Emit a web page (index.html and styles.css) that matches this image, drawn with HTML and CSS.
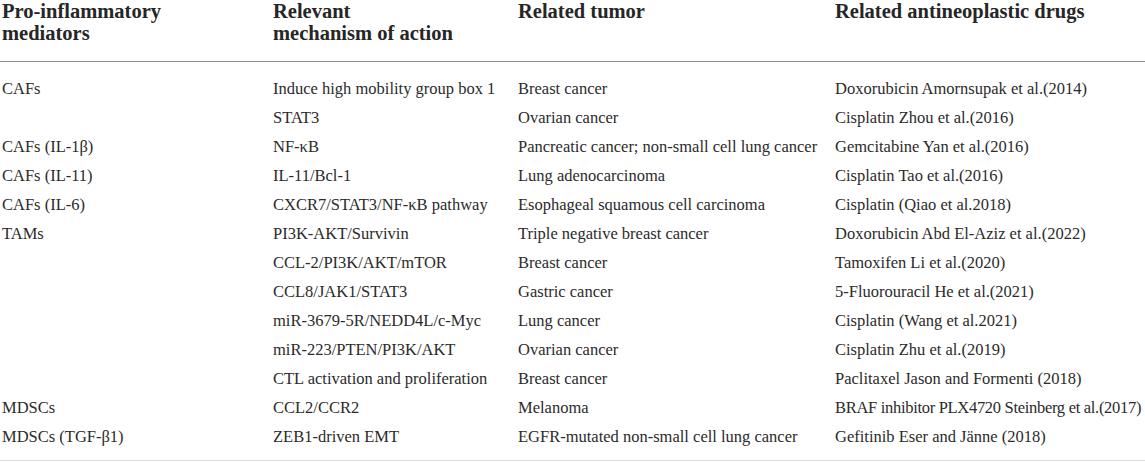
FILE: index.html
```html
<!DOCTYPE html>
<html lang="en">
<head>
<meta charset="utf-8">
<title>Pro-inflammatory mediators</title>
<link rel="stylesheet" href="styles.css">
</head>
<body>
<table class="data">
  <colgroup>
    <col class="c1"><col class="c2"><col class="c3"><col class="c4">
  </colgroup>
  <thead>
    <tr>
      <th>Pro-inflammatory<br>mediators</th>
      <th>Relevant<br>mechanism of action</th>
      <th>Related tumor</th>
      <th>Related antineoplastic drugs</th>
    </tr>
  </thead>
  <tbody>
    <tr class="first"><td>CAFs</td><td>Induce high mobility group box 1</td><td>Breast cancer</td><td>Doxorubicin Amornsupak et al.(2014)</td></tr>
    <tr><td></td><td>STAT3</td><td>Ovarian cancer</td><td>Cisplatin Zhou et al.(2016)</td></tr>
    <tr><td>CAFs (IL-1β)</td><td>NF-κB</td><td>Pancreatic cancer; non-small cell lung cancer</td><td>Gemcitabine Yan et al.(2016)</td></tr>
    <tr><td>CAFs (IL-11)</td><td>IL-11/Bcl-1</td><td>Lung adenocarcinoma</td><td>Cisplatin Tao et al.(2016)</td></tr>
    <tr><td>CAFs (IL-6)</td><td>CXCR7/STAT3/NF-κB pathway</td><td>Esophageal squamous cell carcinoma</td><td>Cisplatin (Qiao et al.2018)</td></tr>
    <tr><td>TAMs</td><td>PI3K-AKT/Survivin</td><td>Triple negative breast cancer</td><td>Doxorubicin Abd El-Aziz et al.(2022)</td></tr>
    <tr><td></td><td>CCL-2/PI3K/AKT/mTOR</td><td>Breast cancer</td><td>Tamoxifen Li et al.(2020)</td></tr>
    <tr><td></td><td>CCL8/JAK1/STAT3</td><td>Gastric cancer</td><td>5-Fluorouracil He et al.(2021)</td></tr>
    <tr><td></td><td>miR-3679-5R/NEDD4L/c-Myc</td><td>Lung cancer</td><td>Cisplatin (Wang et al.2021)</td></tr>
    <tr><td></td><td>miR-223/PTEN/PI3K/AKT</td><td>Ovarian cancer</td><td>Cisplatin Zhu et al.(2019)</td></tr>
    <tr><td></td><td>CTL activation and proliferation</td><td>Breast cancer</td><td>Paclitaxel Jason and Formenti (2018)</td></tr>
    <tr><td>MDSCs</td><td>CCL2/CCR2</td><td>Melanoma</td><td class="tight">BRAF inhibitor PLX4720 Steinberg et al.(2017)</td></tr>
    <tr class="last"><td>MDSCs (TGF-β1)</td><td>ZEB1-driven EMT</td><td>EGFR-mutated non-small cell lung cancer</td><td>Gefitinib Eser and Jänne (2018)</td></tr>
  </tbody>
</table>
</body>
</html>
```

FILE: styles.css
```css
html, body {
  margin: 0;
  padding: 0;
  background: #ffffff;
}

body {
  font-family: "Liberation Serif", "Times New Roman", serif;
  color: #2b2b2b;
}

.data {
  width: 1145px;
  border-collapse: collapse;
  table-layout: fixed;
}

.c1 { width: 271px; }
.c2 { width: 245px; }
.c3 { width: 317px; }
.c4 { width: auto; }

.data th {
  font-weight: bold;
  font-size: 20.5px;
  line-height: 22px;
  text-align: left;
  vertical-align: top;
  padding: 0 0 17px 2px;
  border-bottom: 1px solid #8e8e8e;
  color: #262626;
}

.data td {
  font-size: 16.5px;
  line-height: 29px;
  padding: 0 0 0 2px;
  white-space: nowrap;
  vertical-align: middle;
}

.data td.tight {
  letter-spacing: -0.3px;
}

.data tr.first td {
  padding-top: 12px;
}

.data tr.last td {
  padding-bottom: 9px;
  border-bottom: 1px solid #dcdcdc;
}
```
